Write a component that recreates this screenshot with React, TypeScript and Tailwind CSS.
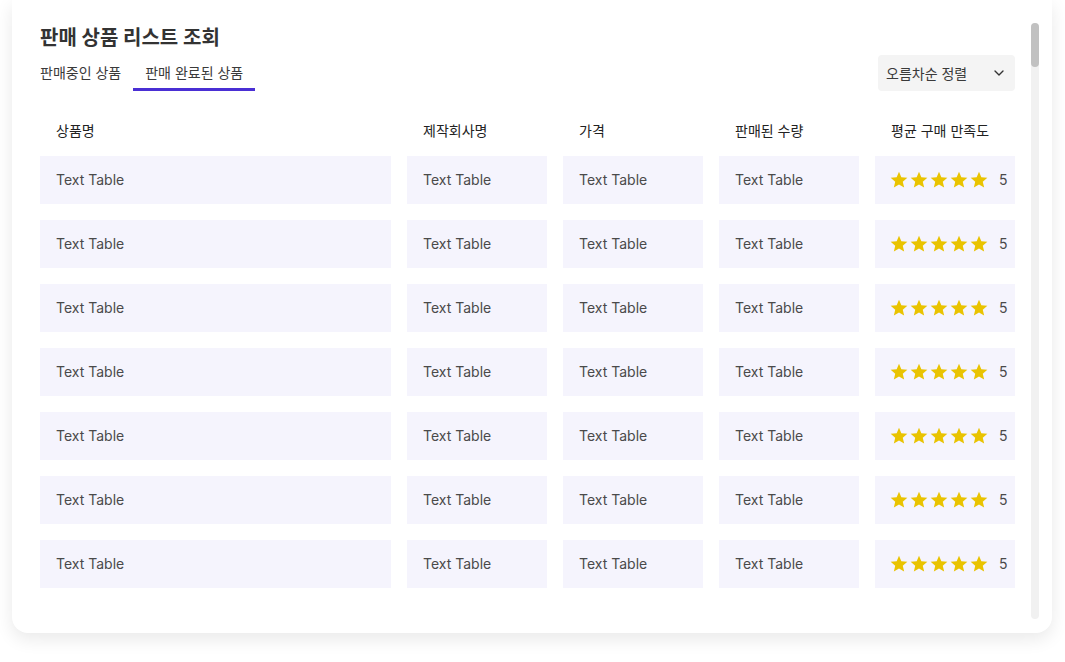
import React from "react";
import { ChevronDown } from "lucide-react";

const Star = () => (
  <svg width="20" height="20" viewBox="0 0 24 24" className="block">
    <path
      fill="#e9c300"
      d="M12 17.27L18.18 21l-1.64-7.03L22 9.24l-7.19-.61L12 2 9.19 8.63 2 9.24l5.46 4.73L5.82 21z"
    />
  </svg>
);

const headers = ["상품명", "제작회사명", "가격", "판매된 수량", "평균 구매 만족도"];

export default function App() {
  const rows = Array.from({ length: 7 });
  return (
    <div
      className="h-[662px] w-[1065px] overflow-hidden bg-white"
      style={{ fontFamily: 'Inter, "Noto Sans CJK KR", "Noto Sans", sans-serif' }}
    >
      <div className="ml-3 flex h-[633px] w-[1040px] rounded-b-2xl bg-white shadow-[0_6px_18px_rgba(0,0,0,0.09)]">
        <div className="ml-[28px] w-[975px] shrink-0 pt-6">
          <h1 className="text-[20px] font-bold leading-7 text-[#333333]">판매 상품 리스트 조회</h1>
          <div className="mt-[3px] flex items-end justify-between">
            <div className="flex items-end text-[14px] leading-5 text-[#3a3a3a]">
              <div className="pr-3 pb-[8px]">판매중인 상품</div>
              <div className="border-b-[3px] border-[#4a2fd4] px-3 pb-[5px]">판매 완료된 상품</div>
            </div>
            <div className="flex h-9 w-[137px] items-center justify-between rounded bg-[#f4f4f4] pl-2 pr-2 text-[14px] text-[#3a3a3a]">
              <span>오름차순 정렬</span>
              <ChevronDown size={16} strokeWidth={2} color="#333" />
            </div>
          </div>
          <div className="grid grid-cols-[351px_140px_140px_140px_140px] gap-x-4">
            {headers.map((h) => (
              <div key={h} className="pt-[30px] pb-[15px] pl-4 text-[14px] leading-5 text-[#222222]">
                {h}
              </div>
            ))}
          </div>
          <div className="grid grid-cols-[351px_140px_140px_140px_140px] gap-x-4 gap-y-4">
            {rows.map((_, i) => (
              <React.Fragment key={i}>
                {[0, 1, 2, 3].map((c) => (
                  <div
                    key={c}
                    className="flex h-12 items-center bg-[#f5f4fd] pl-4 pb-px text-[14px] text-[#4a4a4a]"
                  >
                    Text Table
                  </div>
                ))}
                <div className="flex h-12 items-center bg-[#f5f4fd] pl-[14px] pb-px text-[14px] text-[#4a4a4a]">
                  <Star />
                  <Star />
                  <Star />
                  <Star />
                  <Star />
                  <span className="ml-[10px]">5</span>
                </div>
              </React.Fragment>
            ))}
          </div>
        </div>
        <div className="ml-4 mt-[23px] h-[596px] w-2 shrink-0 rounded-full bg-[#f1f1f1]">
          <div className="h-11 w-2 rounded-full bg-[#c1c1c1]" />
        </div>
      </div>
    </div>
  );
}
